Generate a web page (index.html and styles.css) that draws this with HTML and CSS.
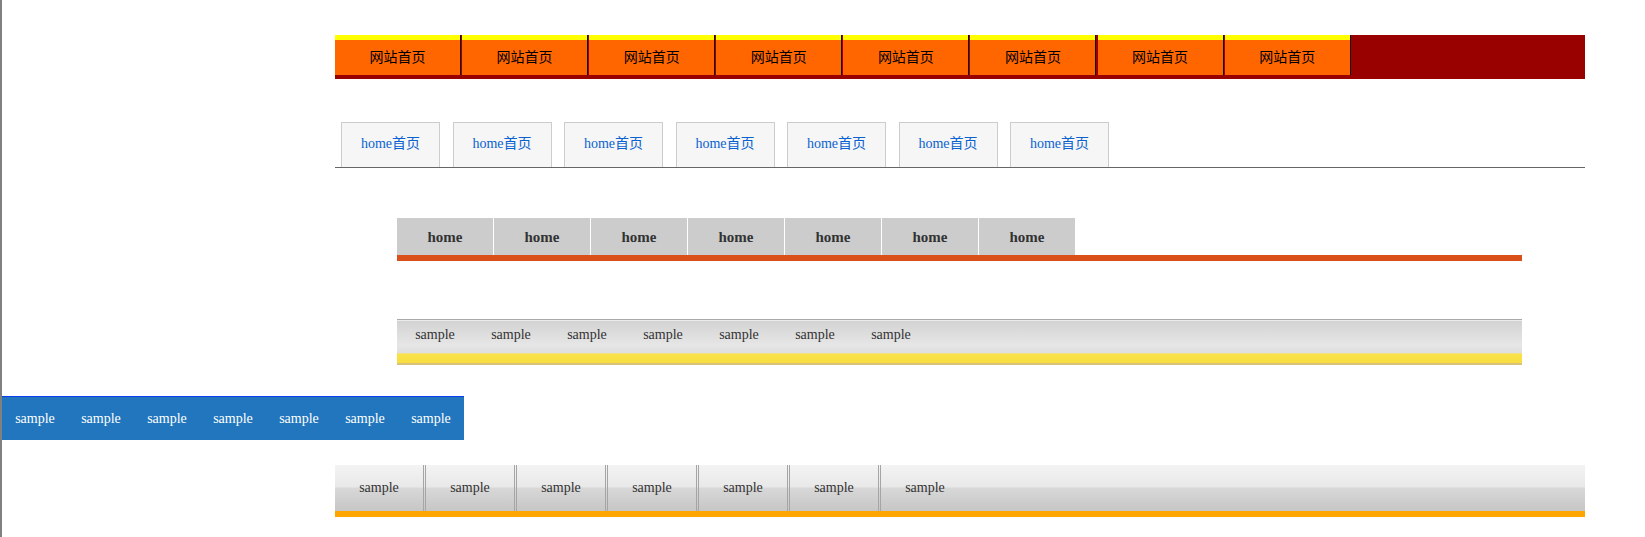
FILE: index.html
```html
<!DOCTYPE html>
<html lang="zh-CN">
<head>
<meta charset="utf-8">
<title>导航菜单</title>
<link rel="stylesheet" href="styles.css">
</head>
<body>
  <div class="col">
    <ul class="nav1">
      <li><a>网站首页</a></li>
      <li><a>网站首页</a></li>
      <li><a>网站首页</a></li>
      <li><a>网站首页</a></li>
      <li><a>网站首页</a></li>
      <li><a>网站首页</a></li>
      <li><a>网站首页</a></li>
      <li><a>网站首页</a></li>
    </ul>

    <ul class="nav2">
      <li>home首页</li>
      <li>home首页</li>
      <li>home首页</li>
      <li>home首页</li>
      <li>home首页</li>
      <li>home首页</li>
      <li>home首页</li>
    </ul>

    <ul class="nav3">
      <li>home</li>
      <li>home</li>
      <li>home</li>
      <li>home</li>
      <li>home</li>
      <li>home</li>
      <li>home</li>
    </ul>

    <ul class="nav4">
      <li>sample</li>
      <li>sample</li>
      <li>sample</li>
      <li>sample</li>
      <li>sample</li>
      <li>sample</li>
      <li>sample</li>
    </ul>
  </div>

  <ul class="nav5">
    <li>sample</li>
    <li>sample</li>
    <li>sample</li>
    <li>sample</li>
    <li>sample</li>
    <li>sample</li>
    <li>sample</li>
  </ul>

  <div class="col">
    <ul class="nav6">
      <li>sample</li>
      <li>sample</li>
      <li>sample</li>
      <li>sample</li>
      <li>sample</li>
      <li>sample</li>
      <li>sample</li>
    </ul>
  </div>
</body>
</html>
```

FILE: styles.css
```css
html {
  background: #ffffff;
}

body {
  margin: 0;
  padding-top: 35px;
  min-height: 502px;
  border-left: 2px solid #808080;
  font-family: "Liberation Serif", "Noto Sans CJK SC", serif;
  font-size: 14px;
  color: #333333;
}

ul {
  list-style: none;
  margin: 0;
  padding: 0;
  display: flex;
}

.col {
  margin-left: 333px;
  width: 1250px;
}

/* bar 1 */
.nav1 {
  background: #990000;
  height: 40px;
  padding-bottom: 4px;
}

.nav1 li {
  flex: none;
  width: 125px;
  border-right: 1px solid #111111;
  margin-right: 1.1px;
}

.nav1 a {
  display: block;
  height: 35px;
  border-top: 5px solid #ffff00;
  background: #ff6600;
  color: #000000;
  text-align: center;
  line-height: 33px;
  font-family: "Noto Sans CJK SC", sans-serif;
  font-size: 14px;
}

/* bar 2 */
.nav2 {
  margin-top: 43px;
  padding-left: 6px;
  gap: 12.5px;
  border-bottom: 1px solid #666666;
}

.nav2 li {
  width: 97px;
  height: 44px;
  border: 1px solid #cccccc;
  border-bottom: none;
  background: #f6f6f6;
  color: #0a62d0;
  text-align: center;
  line-height: 42px;
  font-family: "Liberation Serif", "Noto Sans CJK SC", serif;
}

/* bar 3 */
.nav3 {
  width: 1125px;
  margin: 50px 0 0 62px;
  gap: 1px;
  border-bottom: 6px solid #d9501a;
}

.nav3 li {
  width: 96px;
  height: 37px;
  background: #cccccc;
  text-align: center;
  line-height: 39px;
  font-weight: bold;
  font-size: 15px;
  color: #333333;
}

/* bar 4 */
.nav4 {
  width: 1125px;
  height: 46px;
  margin: 58px 0 0 62px;
  background: linear-gradient(to bottom,
    #a9a9a9 0, #a9a9a9 1px,
    #ececec 1px, #ececec 2px,
    #d3d3d3 2px, #e6e6e6 26px, #dedede 34px,
    #f1e27e 34px, #f1e27e 35px,
    #f9e24a 35px, #f7dd3f 44px,
    #d9c27a 44px, #d9c27a 46px);
}

.nav4 li {
  width: 76px;
  text-align: center;
  line-height: 32px;
  color: #333333;
}

/* bar 5 */
.nav5 {
  width: 462px;
  height: 43px;
  margin-top: 31px;
  border-top: 1px solid #0a3cf0;
  background: #2176bd;
}

.nav5 li {
  width: 66px;
  text-align: center;
  line-height: 43px;
  color: #ffffff;
}

/* bar 6 */
.nav6 {
  margin-top: 25px;
  height: 46px;
  border-bottom: 6px solid #ffa500;
  background: linear-gradient(to bottom, #f3f3f3 0, #e8e8e8 22px, #d8d8d8 23px, #c6c6c6 46px);
}

.nav6 li {
  width: 88px;
  text-align: center;
  line-height: 46px;
  color: #333333;
  border-right: 3px double #a5a5a5;
}

.nav6 li:last-child {
  border-right: none;
}
```
